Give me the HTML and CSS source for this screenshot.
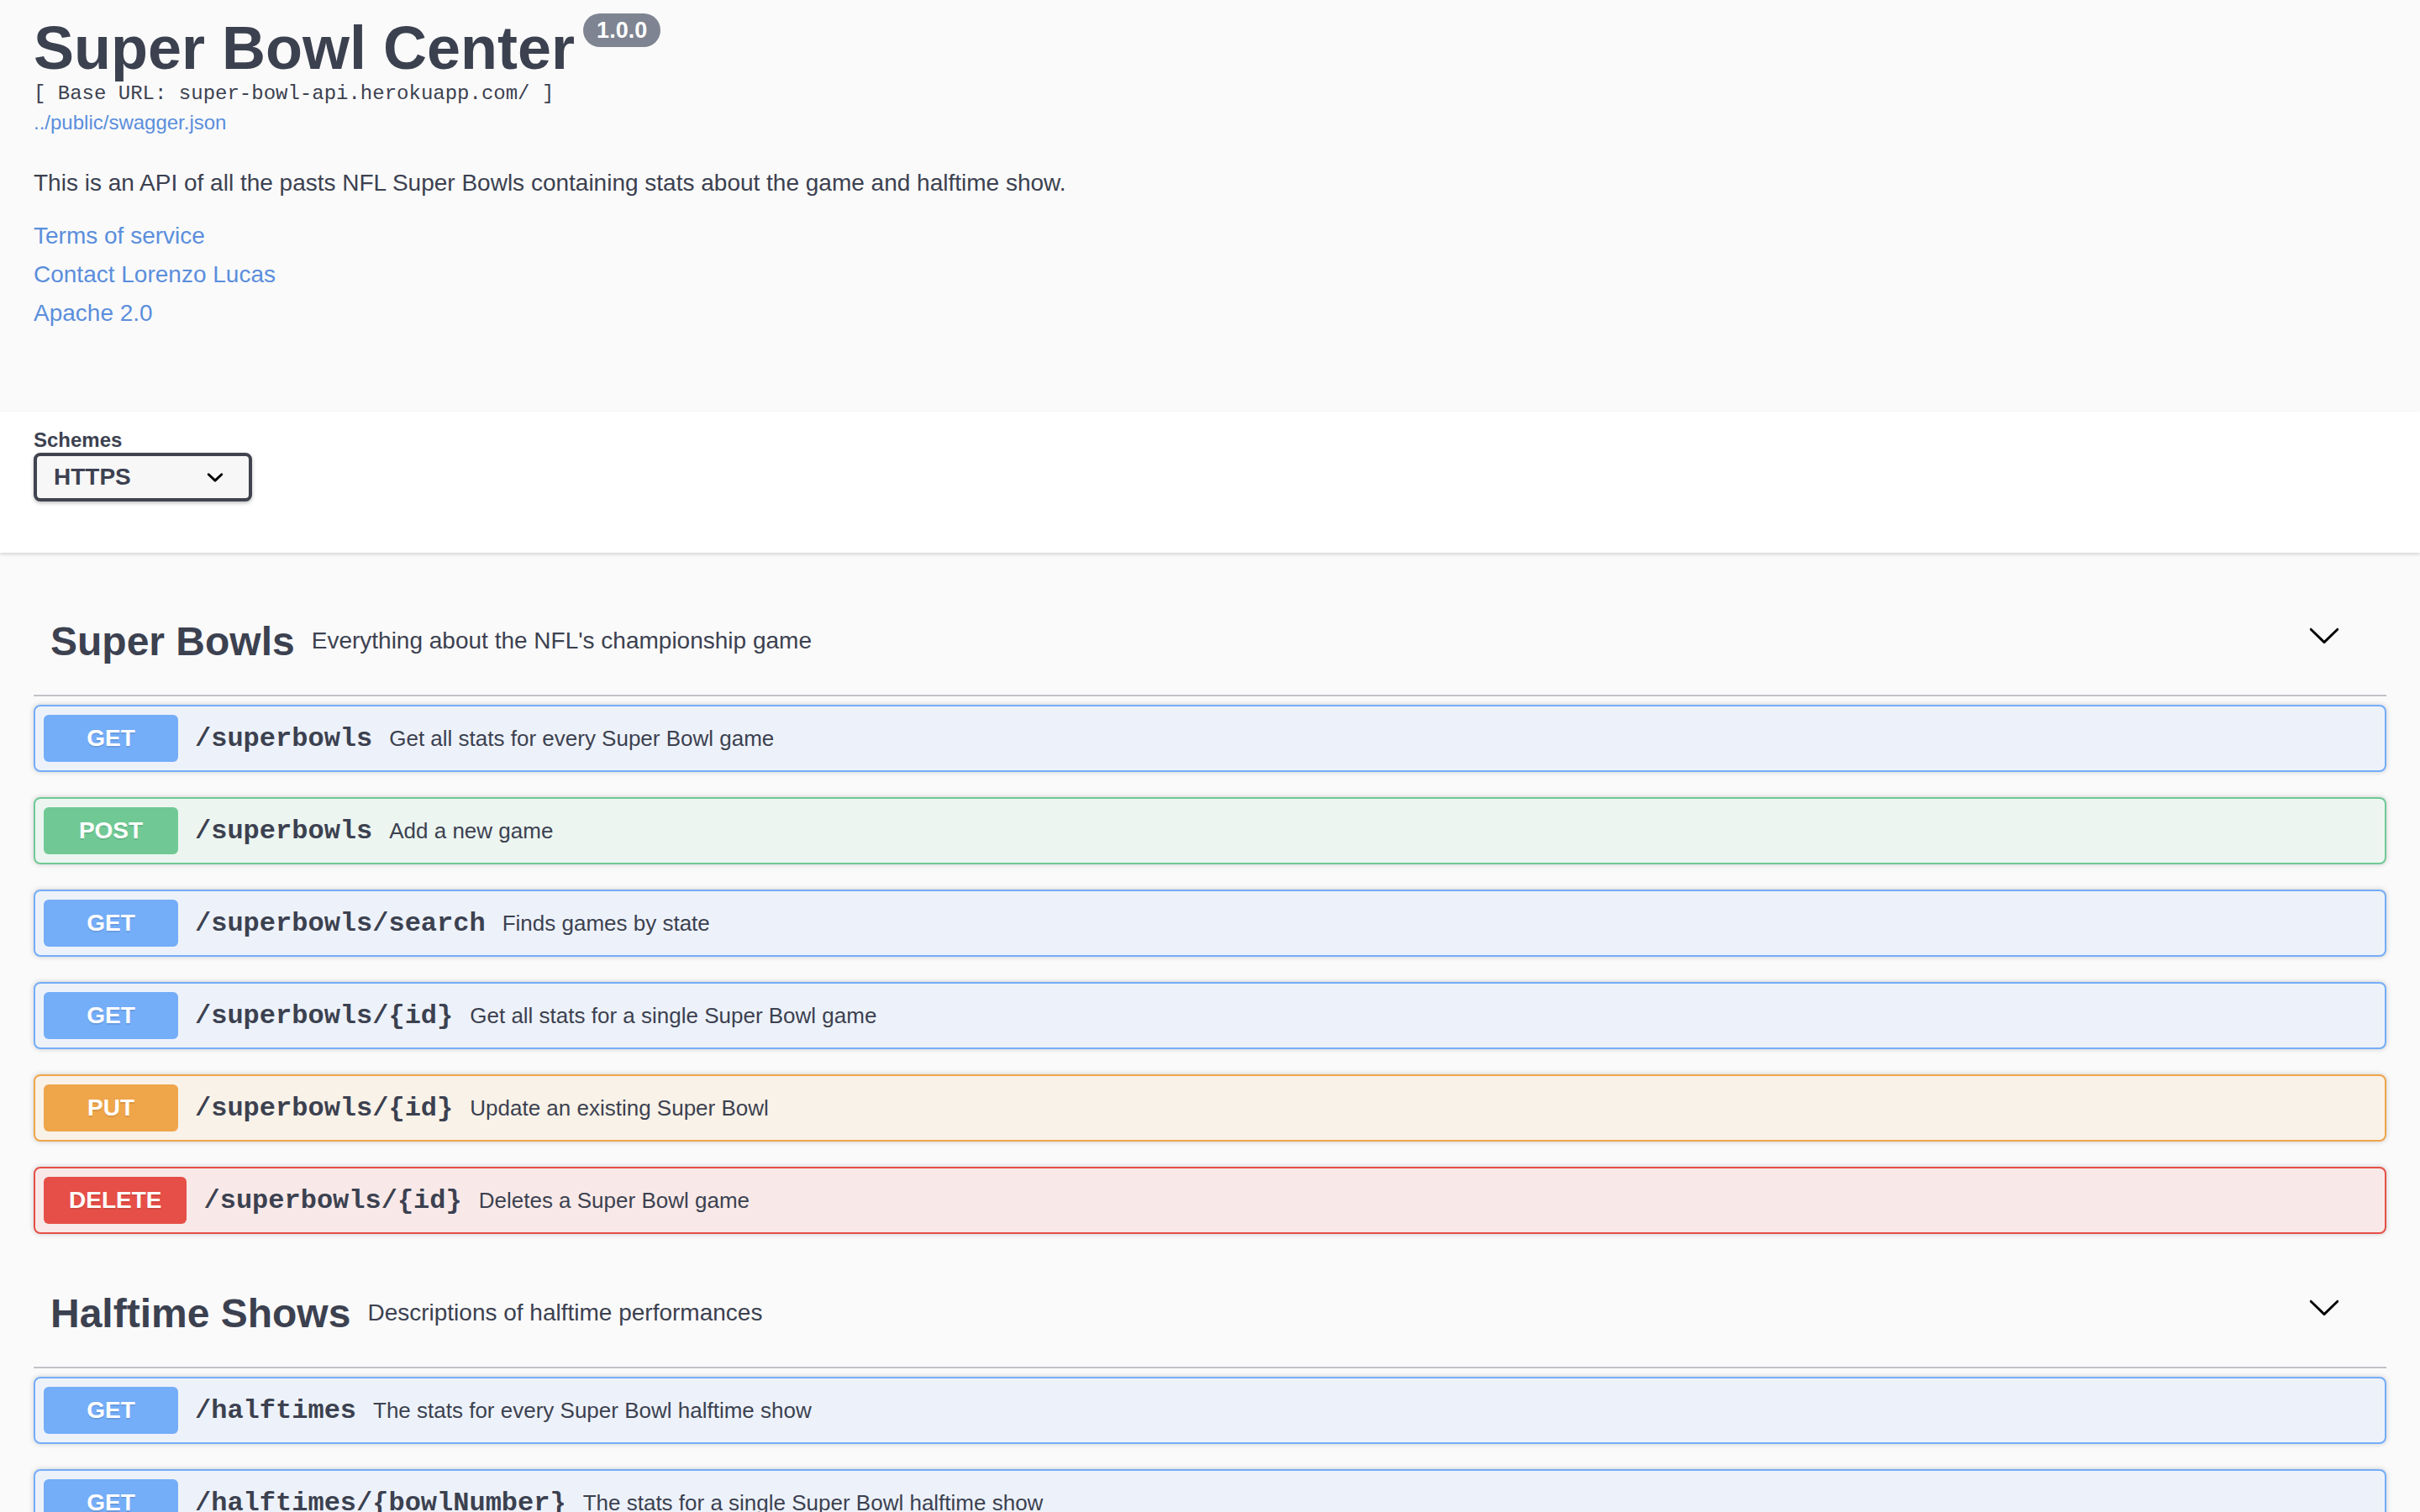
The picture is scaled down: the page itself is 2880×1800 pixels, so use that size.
FILE: index.html
```html
<!DOCTYPE html>
<html lang="en">
<head>
<meta charset="utf-8">
<title>Super Bowl Center</title>
<link rel="stylesheet" href="styles.css">
</head>
<body>
<section class="info">
  <hgroup class="main">
    <h1 class="title">Super Bowl Center<span class="version">1.0.0</span></h1>
    <pre class="base-url">[ Base URL: super-bowl-api.herokuapp.com/ ]</pre>
    <a class="spec-link" href="#">../public/swagger.json</a>
  </hgroup>
  <p class="desc">This is an API of all the pasts NFL Super Bowls containing stats about the game and halftime show.</p>
  <div class="links">
    <a href="#">Terms of service</a>
    <a href="#">Contact Lorenzo Lucas</a>
    <a href="#">Apache 2.0</a>
  </div>
</section>

<section class="schemes">
  <span class="schemes-title">Schemes</span>
  <div class="select">
    <span>HTTPS</span>
    <svg viewBox="0 0 20 20" aria-hidden="true"><path d="M13.418 7.859a.695.695 0 01.978 0 .68.68 0 010 .969l-3.908 3.83a.697.697 0 01-.979 0l-3.908-3.83a.68.68 0 010-.969.695.695 0 01.978 0L10 11l3.418-3.141z" fill="#000"/></svg>
  </div>
</section>

<section class="tag-section">
  <h3 class="tag">
    <span class="tag-name">Super Bowls</span>
    <span class="tag-desc">Everything about the NFL's championship game</span>
    <svg class="expand" viewBox="0 0 20 20" aria-hidden="true"><path d="M17.418 6.109c.272-.268.709-.268.979 0s.271.701 0 .969l-7.908 7.83c-.27.268-.707.268-.979 0l-7.908-7.830c-.27-.268-.27-.701 0-.969.271-.268.709-.268.979 0L10 13.25l7.418-7.141z" fill="#000"/></svg>
  </h3>
  <div class="opblock get"><span class="method">GET</span><span class="path">/superbowls</span><span class="summary">Get all stats for every Super Bowl game</span></div>
  <div class="opblock post"><span class="method">POST</span><span class="path">/superbowls</span><span class="summary">Add a new game</span></div>
  <div class="opblock get"><span class="method">GET</span><span class="path">/superbowls/search</span><span class="summary">Finds games by state</span></div>
  <div class="opblock get"><span class="method">GET</span><span class="path">/superbowls/{id}</span><span class="summary">Get all stats for a single Super Bowl game</span></div>
  <div class="opblock put"><span class="method">PUT</span><span class="path">/superbowls/{id}</span><span class="summary">Update an existing Super Bowl</span></div>
  <div class="opblock delete"><span class="method">DELETE</span><span class="path">/superbowls/{id}</span><span class="summary">Deletes a Super Bowl game</span></div>
</section>

<section class="tag-section">
  <h3 class="tag">
    <span class="tag-name">Halftime Shows</span>
    <span class="tag-desc">Descriptions of halftime performances</span>
    <svg class="expand" viewBox="0 0 20 20" aria-hidden="true"><path d="M17.418 6.109c.272-.268.709-.268.979 0s.271.701 0 .969l-7.908 7.83c-.27.268-.707.268-.979 0l-7.908-7.83c-.27-.268-.27-.701 0-.969.271-.268.709-.268.979 0L10 13.25l7.418-7.141z" fill="#000"/></svg>
  </h3>
  <div class="opblock get"><span class="method">GET</span><span class="path">/halftimes</span><span class="summary">The stats for every Super Bowl halftime show</span></div>
  <div class="opblock get"><span class="method">GET</span><span class="path">/halftimes/{bowlNumber}</span><span class="summary">The stats for a single Super Bowl halftime show</span></div>
</section>
</body>
</html>
```

FILE: styles.css
```css
html, body {
  margin: 0;
  padding: 0;
}

body {
  background: #fafafa;
  font-family: "Liberation Sans", Arial, sans-serif;
  color: #3c4150;
}

.info {
  padding: 16px 40px 94px;
}

.main {
  margin: 0;
}

.title {
  margin: 0;
  display: flex;
  align-items: flex-start;
  font-size: 72px;
  line-height: 82px;
  font-weight: 700;
  color: #3c4150;
}

.version {
  margin-left: 10px;
  height: 40px;
  line-height: 40px;
  padding: 0 16px;
  border-radius: 20px;
  background: #7e8491;
  color: #fff;
  font-size: 27px;
  font-weight: 700;
}

.base-url {
  margin: 0;
  font-family: "Liberation Mono", monospace;
  font-size: 24px;
  line-height: 28px;
  color: #3c4150;
}

.spec-link {
  display: block;
  margin-top: 6px;
  font-size: 24px;
  line-height: 28px;
  color: #5b8edc;
  text-decoration: none;
}

.desc {
  margin: 38px 0 0;
  font-size: 28px;
  line-height: 40px;
}

.links {
  margin-top: 20px;
  display: flex;
  flex-direction: column;
  align-items: flex-start;
}

.links a {
  font-size: 28px;
  line-height: 46px;
  color: #5b8edc;
  text-decoration: none;
}

.schemes {
  background: #fff;
  padding: 20px 40px 61px;
  box-shadow: 0 2px 4px rgba(0, 0, 0, 0.15);
  margin-bottom: 41px;
}

.schemes-title {
  display: block;
  font-size: 24px;
  line-height: 28px;
  font-weight: 700;
}

.select {
  margin-top: 1px;
  width: 260px;
  box-sizing: border-box;
  display: flex;
  align-items: center;
  justify-content: space-between;
  padding: 10px 20px;
  border: 4px solid #41444e;
  border-radius: 8px;
  background: #f7f7f7;
  box-shadow: 0 2px 4px rgba(0, 0, 0, 0.25);
  font-size: 28px;
  line-height: 30px;
  font-weight: 700;
  color: #3c4150;
}

.select svg {
  width: 40px;
  height: 40px;
  margin: -5px 0;
}

.tag-section {
  padding: 0 40px;
}

.tag {
  margin: 0 0 10px;
  height: 130px;
  box-sizing: border-box;
  display: flex;
  align-items: center;
  padding: 0 54px 0 20px;
  border-bottom: 2px solid #c1c3c7;
  color: #3c4150;
}

.tag-name {
  font-size: 48px;
  font-weight: 700;
}

.tag-desc {
  flex: 1;
  padding: 0 20px;
  font-size: 28px;
  font-weight: 400;
}

.expand {
  width: 40px;
  height: 40px;
  margin-bottom: 14px;
}

.opblock {
  display: flex;
  align-items: center;
  padding: 10px;
  margin-bottom: 30px;
  border: 2px solid;
  border-radius: 8px;
  box-shadow: 0 0 6px rgba(0, 0, 0, 0.19);
}

.method {
  min-width: 160px;
  box-sizing: border-box;
  padding: 12px 30px;
  border-radius: 6px;
  color: #fff;
  font-size: 28px;
  font-weight: 700;
  line-height: 32px;
  text-align: center;
  text-shadow: 0 2px 0 rgba(0, 0, 0, 0.1);
}

.path {
  padding: 0 20px;
  font-family: "Liberation Mono", monospace;
  font-size: 32px;
  font-weight: 700;
  color: #3c4150;
}

.summary {
  font-size: 26px;
  color: #3c4150;
}

.get {
  border-color: #74adf8;
  background: #edf2fa;
}

.get .method {
  background: #74adf8;
}

.post {
  border-color: #70c995;
  background: #ecf5f0;
}

.post .method {
  background: #70c995;
}

.put {
  border-color: #efa54a;
  background: #f9f2e8;
}

.put .method {
  background: #efa54a;
}

.delete {
  border-color: #e64f47;
  background: #f8e9e8;
}

.delete .method {
  background: #e64f47;
}
```
